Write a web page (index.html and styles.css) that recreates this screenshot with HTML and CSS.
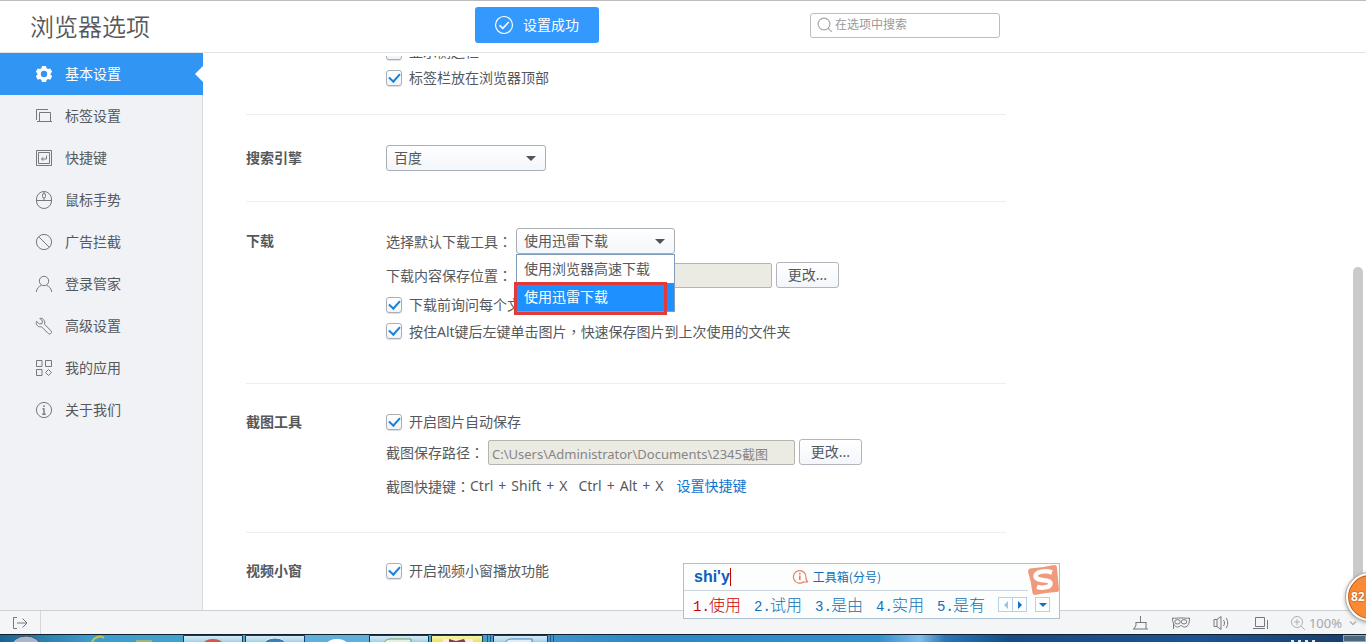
FILE: index.html
```html
<!DOCTYPE html>
<html lang="zh-CN">
<head>
<meta charset="utf-8">
<title>浏览器选项</title>
<link rel="stylesheet" href="styles.css">
</head>
<body>
<header class="topbar">
  <h1 class="title">浏览器选项</h1>
  <div class="toast" role="status">
    <svg width="20" height="20" viewBox="0 0 20 20" fill="none" stroke="#fff"><circle cx="10" cy="10" r="8.5" stroke-width="1.2"/><path d="M5.5 10.2l3.3 3.2 6-6.4" stroke-width="1.6"/></svg>
    <span>设置成功</span>
  </div>
  <label class="search">
    <svg width="16" height="16" viewBox="0 0 16 16" fill="none" stroke="#a5a5a5" stroke-width="1.1"><circle cx="7" cy="7" r="5.9"/><path d="M11 11.2l3.8 3.6"/></svg>
    <input type="text" placeholder="在选项中搜索" aria-label="在选项中搜索">
  </label>
</header>

<div class="main">
  <nav class="sidebar">
    <a class="nav active" href="#basic">
      <svg class="ico" viewBox="0 0 18 18"><path fill="#fff" fill-rule="evenodd" d="M7 1h4l.6 2.2 1.4.8 2.2-.6 2 3.4L15.600 8.400v1.300l1.600 1.600-2 3.400-2.200-.6-1.400.8L11 17H7l-.6-2.100-1.400-.8-2.200.6-2-3.400 1.600-1.600V8.400L.8 6.800l2-3.400L5 4l1.400-.8zM9 5.800a3.200 3.200 0 1 0 0 6.400 3.200 3.200 0 0 0 0-6.400z"/></svg>
      基本设置</a>
    <a class="nav" href="#tabs">
      <svg class="ico" viewBox="0 0 18 18"><path d="M1.500 13V2.500H13M4.500 14.500v-9h11v9M2 14.500h15"/></svg>
      标签设置</a>
    <a class="nav" href="#keys">
      <svg class="ico" viewBox="0 0 18 18"><path d="M1.500 1.500h15v15h-15zM3.500 3.500h11v11h-11z"/><path d="M11.500 6.500v3.500H6.500M8.300 8.200L6.500 10l1.800 1.800"/></svg>
      快捷键</a>
    <a class="nav" href="#mouse">
      <svg class="ico" viewBox="0 0 18 18"><rect x="1.500" y=".5" width="15" height="17" rx="7.500"/><path d="M1.500 9.500h15M9 .5v2M9 7v2"/><rect x="7.500" y="2.500" width="3" height="4.500" rx="1.500"/></svg>
      鼠标手势</a>
    <a class="nav" href="#ads">
      <svg class="ico" viewBox="0 0 18 18"><circle cx="9" cy="9" r="7.600"/><path d="M3.600 3.600l10.800 10.800"/></svg>
      广告拦截</a>
    <a class="nav" href="#login">
      <svg class="ico" viewBox="0 0 18 18"><circle cx="9" cy="6" r="4.700"/><path d="M1.300 17c.3-3.300 2.400-5.600 5-6.600M16.700 17c-.3-3.300-2.400-5.600-5-6.600"/></svg>
      登录管家</a>
    <a class="nav" href="#advanced">
      <svg class="ico" viewBox="0 0 18 18"><path d="M4.800 1.400l2.700 2.700-.5 2.400-2.400.5L1.500 4.300C.9 6 1.300 7.700 2.500 8.800c1.100 1.100 2.600 1.300 3.900.9l6.600 6.600c.8.900 2.100.9 2.900.1s.8-2.100-.1-2.900L9.400 7.200c.7-1.500.5-3.300-.8-4.600C7.600 1.500 6.200 1.100 4.800 1.400z"/></svg>
      高级设置</a>
    <a class="nav" href="#apps">
      <svg class="ico" viewBox="0 0 18 18"><path d="M1.500 1.500h5.500v6H1.500zM10.500 1.500h6v6h-6zM1.500 10.500h5.500v6H1.500zM13.500 10.500l3 3-3 3-3-3z"/></svg>
      我的应用</a>
    <a class="nav" href="#about">
      <svg class="ico" viewBox="0 0 18 18"><circle cx="9" cy="9" r="7.600"/><path d="M9 7.500v6M7.500 7.800H9M7.300 13.300h3.400M9 4.300v1.600" stroke-width="1.400"/></svg>
      关于我们</a>
  </nav>

  <main class="content">
    <div class="sections">
      <section class="section tight">
        <h2></h2>
        <div class="rows">
          <label class="row check"><input type="checkbox">显示侧边栏</label>
          <label class="row check"><input type="checkbox" checked>标签栏放在浏览器顶部</label>
        </div>
      </section>
      <section class="section even">
        <h2>搜索引擎</h2>
        <div class="rows">
          <div class="row"><span class="select"><select aria-label="搜索引擎"><option>百度</option></select></span></div>
        </div>
      </section>
      <section class="section download">
        <h2>下载</h2>
        <div class="rows">
          <div class="row">
            <label for="tool">选择默认下载工具<span class="punct" lang="zh-TW">：</span></label>
            <span class="select open">
              <select id="tool"><option>使用迅雷下载</option><option>使用浏览器高速下载</option></select>
              <span class="menu" role="listbox">
                <span class="option" role="option">使用浏览器高速下载</span>
                <span class="option selected" role="option" aria-selected="true">使用迅雷下载</span>
                <span class="marker"></span>
              </span>
            </span>
          </div>
          <div class="row spaced">
            <label for="dir">下载内容保存位置<span class="punct" lang="zh-TW">：</span></label>
            <input class="path short" id="dir" type="text" disabled>
            <button class="btn" type="button">更改...</button>
          </div>
          <label class="row check near"><input type="checkbox" checked>下载前询问每个文件</label>
          <label class="row check"><input type="checkbox" checked><span>按住Alt键后左键单击图片<span class="punct" lang="zh-TW">，</span>快速保存图片到上次使用的文件夹</span></label>
        </div>
      </section>
      <section class="section">
        <h2>截图工具</h2>
        <div class="rows">
          <label class="row check"><input type="checkbox" checked>开启图片自动保存</label>
          <div class="row near">
            <label for="shot">截图保存路径<span class="punct" lang="zh-TW">：</span></label>
            <input class="path" id="shot" type="text" value="C:\Users\Administrator\Documents\2345截图" disabled>
            <button class="btn" type="button">更改...</button>
          </div>
          <div class="row spaced keys">
            <span>截图快捷键<span class="punct" lang="zh-TW">：</span></span>
            <span class="combo"><span>Ctrl</span><span>+</span><span>Shift</span><span>+</span><span>X</span></span>
            <span class="combo"><span>Ctrl</span><span>+</span><span>Alt</span><span>+</span><span>X</span></span>
            <a href="#keys">设置快捷键</a>
          </div>
        </div>
      </section>
      <section class="section">
        <h2>视频小窗</h2>
        <div class="rows">
          <label class="row check"><input type="checkbox" checked>开启视频小窗播放功能</label>
        </div>
      </section>
    </div>
    <div class="scrollbar"><div class="thumb"></div></div>
  </main>
</div>

<footer class="status">
  <button class="exit" type="button" aria-label="展开侧栏"><svg width="18" height="16" viewBox="0 0 18 16"><path d="M6 2.500H2.500v11H6M6 8h10M11.500 3.500L16 8l-4.500 4.500"/></svg></button>
  <div class="tools">
    <button type="button" aria-label="清理"><svg width="18" height="16" viewBox="0 0 18 16"><path d="M8.500 1v6M3.500 7.500h11M4 7.500v2.500l-2 4M14 7.500v6.500M1 14h15"/></svg></button>
    <button type="button" aria-label="隐身"><svg width="20" height="16" viewBox="0 0 20 16"><path d="M1.500 3c3 .8 5-.4 8.500 0 3.500-.4 5.500.8 8.500 0 0 5-1 9-5 9-2 0-2.500-1.500-3.500-1.500S8.500 12 6.500 12c-3 0-5-4-5-9z"/><ellipse cx="6.500" cy="6.800" rx="2.700" ry="2.200"/><ellipse cx="13" cy="6.800" rx="2.700" ry="2.200"/><path d="M2.500 8v6"/></svg></button>
    <button type="button" aria-label="声音"><svg width="18" height="16" viewBox="0 0 18 16"><path d="M2 4.500h3l4-3v13l-4-3H2zM5 4.500v7M11.500 5c1.300 1.500 1.300 4.500 0 6M14 3c2.300 2.500 2.300 7.500 0 10"/></svg></button>
    <button type="button" aria-label="小窗"><svg width="18" height="16" viewBox="0 0 18 16"><path d="M4.500 2.500h9v9h-9zM2 13.500h12M16.500 5v9"/></svg></button>
    <button class="zoom" type="button"><svg width="16" height="16" viewBox="0 0 16 16"><circle cx="7" cy="7" r="5.500"/><path d="M11 11l4 4M4 7h6M7 4v6"/></svg><span>100%</span><svg class="caret" width="8" height="8" viewBox="0 0 8 8"><path d="M1 2.500l3 3 3-3" stroke-width="1.300"/></svg></button>
  </div>
</footer>

<div class="taskbar">
  <svg class="tasks" width="560" height="7" viewBox="0 0 560 7">
    <defs>
      <linearGradient id="g" x2="0" y2="1"><stop offset="0" stop-color="#d9edf7"/><stop offset="1" stop-color="#9bcbe4"/></linearGradient>
      <linearGradient id="y" x2="0" y2="1"><stop offset="0" stop-color="#fbf7b0"/><stop offset="1" stop-color="#e8dc5c"/></linearGradient>
    </defs>
    <ellipse cx="26" cy="12" rx="15" ry="11" fill="#a9b8c8" stroke="#344f6c"/>
    <path d="M92 7c2-5 9-7 12-4" fill="none" stroke="#c8c152" stroke-width="2"/>
    <path d="M136 6h16" stroke="#9cb582" stroke-width="2"/>
    <path fill="#5fb0da" d="M305 0h64v7h-64z"/>
    <g stroke="#123b5c"><path fill="url(#g)" d="M183.500 8V.5h59V8zM245.500 8V.5h59V8zM369.500 8V.5h59V8zM493.500 8V.5h54V8z"/><path fill="url(#y)" d="M431.500 8V.5h51V8z"/></g>
    <ellipse cx="213" cy="8" rx="9" ry="4" fill="#d9564a"/>
    <ellipse cx="275" cy="9" rx="11" ry="6" fill="#3d7fb5" stroke="#e8f3fa"/>
    <ellipse cx="337" cy="9" rx="10" ry="5" fill="#fff"/>
    <path d="M384 8c2-4 5-4 8-4h19v4z" fill="#e2f2df" stroke="#6a9f68"/>
    <path d="M443 4h30v4h-30z" fill="#f7eedf"/><path d="M449 4l7 2 8-2 2 4h-17z" fill="#8a3b50"/>
    <path d="M505 8c2-4 5-4 8-4h19v4z" fill="#e0ecf8" stroke="#4d7fb8"/>
    <path d="M487.500 0v7M490.500 0v7M550.500 0v7M553.500 0v7" stroke="#235b86"/>
  </svg>
  <span class="clock"></span>
  <span class="peek"></span>
</div>

<div class="ime">
  <div class="ime-top">
    <span class="typed">shi'y</span>
    <span class="toolbox"><svg width="17" height="16" viewBox="0 0 17 16" fill="none" stroke="#e8805c" stroke-width="1.200"><path d="M12 12.500A6.300 6.300 0 1 1 14 8.500c0 3 .5 4 2 4.500h-4"/><path d="M7.800 6.500V11M7.800 3.800v1.600" stroke-width="1.600"/></svg>工具箱(分号)</span>
  </div>
  <div class="ime-list">
    <span class="cand first"><i>1.</i>使用</span>
    <span class="cand"><i>2.</i>试用</span>
    <span class="cand"><i>3.</i>是由</span>
    <span class="cand"><i>4.</i>实用</span>
    <span class="cand"><i>5.</i>是有</span>
    <span class="pager">
      <button type="button" aria-label="上一页"><svg width="8" height="8" viewBox="0 0 8 8"><path d="M6 0v8L2 4z" fill="#9dc4e6"/></svg></button>
      <button type="button" aria-label="下一页"><svg width="8" height="8" viewBox="0 0 8 8"><path d="M2 0v8l4-4z" fill="#1271c2"/></svg></button>
    </span>
    <button class="drop" type="button" aria-label="更多"><svg width="8" height="8" viewBox="0 0 8 8"><path d="M0 2h8L4 6z" fill="#1271c2"/></svg></button>
  </div>
  <svg class="sogou" width="32" height="32" viewBox="0 0 32 32"><path d="M3 4.500Q14 4 27 1q3 0 3 3l2 22q0 2-2 2-11 .5-22 3-2 0-2.500-2Q4 17 1 7.500 1 5 3 4.500z" fill="#f09a7c"/><path d="M25 8.500C19 6.500 9 7 8.500 12c0 6 15 2.500 15 7.500 0 4-8 5-13.500 3.300" fill="none" stroke="#fff" stroke-width="4.500"/></svg>
</div>
<div class="ball">82</div>
</body>
</html>
```

FILE: styles.css
```css
* { box-sizing: border-box; }
body {
  margin: 0;
  height: 100vh;
  display: flex;
  flex-direction: column;
  position: relative;
  overflow: hidden;
  background: #fff;
  color: #55585c;
  font: 14px/20px "Noto Sans", "Noto Sans CJK SC", sans-serif;
}
button, input, select { font: inherit; color: inherit; }
button { padding: 0; border: 0; background: none; }
svg { display: block; flex: none; }
.punct { font-family: "Noto Sans CJK TC", sans-serif; }

.topbar {
  flex: none;
  height: 53px;
  display: flex;
  align-items: center;
  padding-bottom: 3px;
  border-top: 1px solid #bcbcbc;
  border-bottom: 1px solid #e2e4e6;
}
.title {
  width: 475px;
  margin: 0;
  padding: 4px 0 0 30px;
  font-size: 24px;
  line-height: 32px;
  font-weight: 350;
  color: #55585c;
}
.toast {
  display: flex;
  align-items: center;
  gap: 9px;
  width: 124px;
  height: 36px;
  padding-left: 19px;
  border-radius: 3px;
  background: #3399ff;
  color: #fff;
}
.search {
  display: flex;
  align-items: center;
  width: 190px;
  height: 25px;
  margin-left: 211px;
  padding-left: 6px;
  gap: 2px;
  border: 1px solid #bdbdbd;
  border-radius: 3px;
}
.search input {
  width: 100%;
  padding: 0;
  border: 0;
  outline: 0;
  background: none;
  font-size: 12px;
}
.search input::placeholder { color: #999; opacity: 1; }

.main { flex: 1; min-height: 0; display: flex; }
.sidebar {
  flex: none;
  width: 203px;
  background: #f0f2f6;
  border-right: 1px solid #d6dade;
}
.nav {
  display: flex;
  align-items: center;
  gap: 12px;
  height: 42px;
  padding-left: 35px;
  color: #55585c;
  text-decoration: none;
}
.ico { width: 18px; height: 18px; fill: none; stroke: #75787c; }
.nav.active {
  position: relative;
  margin-right: -1px;
  background: #3196f3;
  color: #fff;
}
.nav.active .ico { stroke: none; }
.nav.active::after {
  content: "";
  position: absolute;
  right: 0;
  top: 13px;
  border: 8px solid transparent;
  border-left: 0;
  border-right-color: #fff;
}

.content {
  flex: 1;
  min-width: 0;
  display: flex;
  justify-content: space-between;
  margin-top: 3px;
  overflow: hidden;
}
.sections { width: 803px; margin-top: -17px; padding-left: 43px; }
.section {
  display: flex;
  padding: 25px 0 33px;
  border-bottom: 1px solid #eceeef;
}
.section.tight { padding: 0 0 23px; }
.section.even { padding: 30px 0; }
.section.download { padding: 26px 0 39px; }
.section:last-child { border: 0; }
.section h2 {
  flex: none;
  width: 140px;
  margin: 0;
  font-size: 14px;
  line-height: 26px;
  font-weight: 700;
}
.row { display: flex; align-items: center; gap: 4px; height: 26px; white-space: nowrap; }
.spaced { margin-top: 8px; }
.near { margin-top: 4px; }
.check { gap: 7px; }
.check input {
  appearance: none;
  flex: none;
  width: 16px;
  height: 16px;
  margin: 0;
  border: 1px solid #a9aeb4;
  border-radius: 3px;
  background: linear-gradient(#fff, #f1f5fa);
  box-shadow: 0 1px 1px #dde0e4;
  display: grid;
  place-items: center;
}
.check input:checked::before {
  content: "";
  width: 9px;
  height: 5px;
  margin-bottom: 3px;
  border: solid #1b82dc;
  border-width: 0 0 2px 2px;
  transform: rotate(-48deg);
}
.keys { gap: 0; }
.combo { display: flex; gap: 5px; margin-right: 11px; }
.keys a { margin-left: 2px; color: #0f74cc; text-decoration: none; }

.select { position: relative; display: block; width: 160px; }
.select select {
  appearance: none;
  display: block;
  width: 100%;
  height: 26px;
  padding: 0 7px;
  border: 1px solid #a9aeb4;
  border-radius: 3px;
  background: linear-gradient(#fff, #f3f6fa);
}
.select::after {
  content: "";
  position: absolute;
  right: 10px;
  top: 11px;
  border: 5px solid transparent;
  border-top-color: #505357;
  border-bottom: 0;
}
.select.open { width: 159px; }
.menu {
  position: absolute;
  z-index: 2;
  top: 26px;
  left: 0;
  width: 100%;
  border: 1px solid #7f9db9;
  background: #fff;
}
.option { display: block; padding: 4px 7px; }
.option.selected { background: #1e90ff; color: #fff; }
.marker {
  position: absolute;
  left: -3px;
  right: 7px;
  bottom: -4px;
  height: 33px;
  border: 3px solid #e03a3a;
}
.path {
  width: 307px;
  height: 25px;
  padding: 2px 3px 0;
  border: 1px solid #b5b5b0;
  border-radius: 2px;
  background: #ebebe4;
  color: #858585;
  font-size: 13px;
}
.path.short { width: 256px; }
.btn {
  width: 63px;
  height: 26px;
  border: 1px solid #b2b6bc;
  border-radius: 3px;
  background: linear-gradient(#fff, #f3f6fa);
}
.scrollbar { display: flex; align-items: flex-end; padding-right: 3px; }
.thumb {
  width: 10px;
  height: 62%;
  border-radius: 5px 5px 0 0;
  background: #cacaca;
}

.status {
  flex: none;
  display: flex;
  justify-content: space-between;
  height: 24px;
  border-top: 1px solid #cbd0d0;
  background: #f4f5f7;
}
.status svg { fill: none; stroke: #75787c; }
.exit {
  display: grid;
  place-items: center;
  width: 41px;
  border-right: 1px solid #d3d8d9;
}
.tools { display: flex; align-items: center; gap: 21px; padding-right: 9px; }
.zoom { display: flex; align-items: center; gap: 3px; color: #a5a7aa; font-size: 13px; }
.status .zoom svg { stroke: #adafb2; }
.caret { margin-left: 4px; }

.taskbar {
  flex: none;
  display: flex;
  height: 8px;
  border-top: 1px solid #10202f;
  background: linear-gradient(90deg, #1d628f 0, #3b9ccb 90px, #55acd8 380px, #2d87c5 650px, #3391cf 880px, #84bce6 920px, #2a76b6 945px, #174b86 1010px, #1d5390 1200px, #163d68 100%);
}
.tasks { flex: none; }
.clock {
  width: 28px;
  height: 2px;
  margin: 5px 0 0 auto;
  background: repeating-linear-gradient(90deg, #dfe8f0 0 3px, transparent 3px 7px);
}
.peek { width: 23px; margin-left: 24px; border: 1px solid #93a5b5; background: #4c6880; }

.ime {
  position: absolute;
  left: 683px;
  top: 563px;
  width: 377px;
  border: 1px solid #adc0d0;
  background: #fcfefe;
  color: #1271b5;
  font-family: "Noto Sans CJK SC", sans-serif;
}
.ime-top {
  display: flex;
  align-items: center;
  height: 27px;
  margin-right: 31px;
  padding-left: 10px;
  border-bottom: 1px solid #cdd5dc;
  font-size: 12px;
}
.typed {
  border-right: 1px solid #c00;
  font: bold 16px/18px "Liberation Sans", sans-serif;
  color: #0b5fbd;
}
.toolbox { display: flex; align-items: center; gap: 4px; margin-left: 61px; }
.ime-list { display: flex; align-items: center; height: 27px; padding-left: 9px; }
.cand { width: 61px; font-size: 16px; font-weight: 300; white-space: nowrap; }
.cand i { display: inline-block; width: 16px; font: 14px "Liberation Mono", monospace; }
.cand.first { color: #c00; }
.pager { display: flex; border: 1px solid #b8d0e8; }
.pager button { display: grid; place-items: center; width: 13px; height: 13px; }
.pager button + button { width: 14px; border-left: 1px solid #b8d0e8; }
.drop { display: grid; place-items: center; width: 15px; height: 15px; margin-left: 8px; border: 1px solid #b8d0e8; }
.sogou { position: absolute; right: 0; top: 0; }

.ball {
  position: absolute;
  right: -28px;
  top: 573px;
  width: 48px;
  height: 48px;
  padding-left: 3px;
  border: 2px solid #fff;
  border-radius: 50%;
  background: #fb8a35;
  box-shadow: 0 0 0 1px #a9a9a9, inset 0 0 0 1px #c2601c, 0 1px 5px #888;
  color: #fff;
  font: bold 12px/44px "Noto Sans", sans-serif;
  text-shadow: 0 0 2px #8a3b00;
}
```
